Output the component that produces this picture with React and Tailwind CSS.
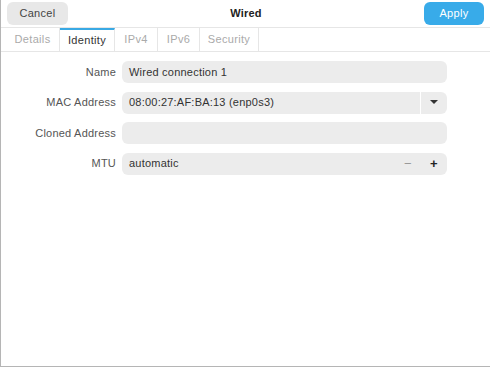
import React from "react";

const Row = ({ label, children }) => (
  <div className="flex items-center h-[22px]">
    <div className="w-[115px] text-right text-[11px] text-[#555] tracking-[0.02em]">{label}</div>
    <div className="ml-[6px] w-[325px] h-[22px]">{children}</div>
  </div>
);

const tabs = [
  { name: "Details", w: "w-[54px]" },
  { name: "Identity", w: "w-[55px]" },
  { name: "IPv4", w: "w-[43px]" },
  { name: "IPv6", w: "w-[42px]" },
  { name: "Security", w: "w-[59px]" },
];

export default function App() {
  return (
    <div
      className="w-[490px] h-[367px] bg-white border-l border-b border-[#b5b5b5] flex flex-col text-[#333]"
      style={{ fontFamily: '"Liberation Sans", Arial, sans-serif' }}
    >
      <div className="h-[28px] flex items-center justify-between px-[6px] border-b border-[#e6e6e6]">
        <button className="w-[61px] h-[23px] rounded-[6px] bg-[#e8e8e8] text-[11px] text-[#444] tracking-[0.03em]">Cancel</button>
        <div className="text-[11px] font-bold text-[#222] tracking-[0.02em]">Wired</div>
        <button className="w-[60px] h-[23px] rounded-[6px] bg-[#38abe9] text-[11px] text-white tracking-[0.03em]">Apply</button>
      </div>
      <div className="h-[24px] flex pl-[5px] border-b border-[#e6e6e6]">
        {tabs.map((t) => (
          <div
            key={t.name}
            className={
              t.name === "Identity"
                ? `${t.w} flex items-center justify-center text-[11px] text-[#333] tracking-[0.03em] border-t-2 border-[#39a9e4] border-r border-r-[#e6e6e6]`
                : `${t.w} flex items-center justify-center text-[11px] text-[#aaa] tracking-[0.03em] border-r border-[#e6e6e6]`
            }
          >
            {t.name}
          </div>
        ))}
      </div>
      <div className="flex flex-col gap-[8.5px] pt-[9px]">
        <Row label="Name">
          <div className="h-full rounded-[6px] bg-[#ececec] flex items-center px-[7px] text-[11px] tracking-[0.02em]">Wired connection 1</div>
        </Row>
        <Row label="MAC Address">
          <div className="h-full rounded-[6px] bg-[#ececec] flex items-center text-[11px] tracking-[0.02em]">
            <div className="flex-1 px-[7px]">08:00:27:AF:BA:13 (enp0s3)</div>
            <div className="w-[27px] h-full border-l border-white flex items-center justify-center">
              <svg width="8" height="5" viewBox="0 0 8 5"><path d="M0 0h8L4 4z" fill="#333" /></svg>
            </div>
          </div>
        </Row>
        <Row label="Cloned Address">
          <div className="h-full rounded-[6px] bg-[#ececec]" />
        </Row>
        <Row label="MTU">
          <div className="h-full rounded-[6px] bg-[#ececec] flex items-center text-[11px] tracking-[0.02em]">
            <div className="flex-1 px-[7px]">automatic</div>
            <div className="w-[26px] text-center text-[#999] text-[13px]">−</div>
            <div className="w-[26px] text-center text-[#222] text-[13px] font-bold">+</div>
          </div>
        </Row>
      </div>
    </div>
  );
}
